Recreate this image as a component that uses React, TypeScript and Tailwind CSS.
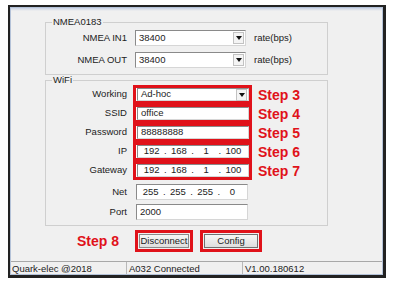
import React from "react";

const ui = { fontFamily: '"Liberation Sans", Arial, sans-serif' };

function Combo({ value }: { value: string }) {
  return (
    <div className="flex h-full w-full items-center border border-t-[#8a8a8a] border-l-[#8a8a8a] border-r-[#d6d6d6] border-b-[#d6d6d6] bg-white pl-[3px]">
      <span className="flex-1">{value}</span>
      <span className="mr-[1px] flex h-[12px] w-[11px] items-center justify-center border border-[#c2c2c2] bg-[#f4f4f4]">
        <svg width="6" height="4" viewBox="0 0 6 4">
          <path d="M0 0h6L3 4z" fill="#111" />
        </svg>
      </span>
    </div>
  );
}

function Field({ children }: { children: React.ReactNode }) {
  return (
    <div className="flex h-full w-full items-center border border-t-[#8a8a8a] border-l-[#8a8a8a] border-r-[#d6d6d6] border-b-[#d6d6d6] bg-white pl-[3px]">
      {children}
    </div>
  );
}

function Ip({ parts }: { parts: string[] }) {
  return (
    <Field>
      <div className="flex w-full items-center pr-[4px]">
        {parts.map((p, i) => (
          <React.Fragment key={i}>
            {i > 0 && <span className="w-[6px] text-center">.</span>}
            <span className="flex-1 text-center">{p}</span>
          </React.Fragment>
        ))}
      </div>
    </Field>
  );
}

function Step({ n }: { n: number }) {
  return (
    <span className="ml-[6px] text-[14px] font-bold leading-none text-[#e0121a]" style={ui}>
      Step {n}
    </span>
  );
}

function RedRow({ label, step, children }: { label: string; step: number; children: React.ReactNode }) {
  return (
    <div className="flex h-[19px] items-center">
      <span className="w-[82px] pr-[1px] text-right">{label}</span>
      <div className="ml-[5px] h-[19px] w-[119px] border-[3px] border-[#e0121a] bg-white pl-px">{children}</div>
      <Step n={step} />
    </div>
  );
}

function PlainRow({ label, children }: { label: string; children: React.ReactNode }) {
  return (
    <div className="flex h-[16px] items-center">
      <span className="w-[82px] pr-[1px] text-right">{label}</span>
      <div className="ml-[8px] h-[16px] w-[112px]">{children}</div>
    </div>
  );
}

export default function App() {
  return (
    <div className="h-[286px] w-[399px] bg-white pl-[8px] pt-[5px] text-[9.5px] text-[#222]" style={ui}>
      <div className="h-[273px] w-[378px] border-2 border-r-[3px] border-b-[3px] border-[#222]">
        <div className="flex h-full flex-col border border-[#b4c2d8] bg-[#f0f0f0]">
          <div className="h-[3px] bg-gradient-to-b from-[#c9d2e4] to-[#f0f0f0]" />
          {/* NMEA0183 */}
          <fieldset className="ml-[34px] mt-[6px] w-[283px] border border-[#cfcfcf] px-0 pb-[6px] pt-[3px]">
            <legend className="ml-[6px] px-[1px] leading-[10px]">NMEA0183</legend>
            <div className="flex flex-col gap-[6px]">
              {["NMEA IN1", "NMEA OUT"].map((l) => (
                <div key={l} className="flex h-[16px] items-center">
                  <span className="w-[82px] pr-[1px] text-right">{l}</span>
                  <div className="ml-[7px] h-[16px] w-[111px]">
                    <Combo value="38400" />
                  </div>
                  <span className="ml-[8px]">rate(bps)</span>
                </div>
              ))}
            </div>
          </fieldset>

          {/* WiFi */}
          <fieldset className="ml-[34px] w-[283px] border border-[#cfcfcf] px-0 pb-[5px] pt-0">
            <legend className="ml-[6px] px-[1px] leading-[10px]">WiFi</legend>
            <div className="flex flex-col">
              <RedRow label="Working" step={3}>
                <Combo value="Ad-hoc" />
              </RedRow>
              <RedRow label="SSID" step={4}>
                <Field>office</Field>
              </RedRow>
              <RedRow label="Password" step={5}>
                <Field>88888888</Field>
              </RedRow>
              <RedRow label="IP" step={6}>
                <Ip parts={["192", "168", "1", "100"]} />
              </RedRow>
              <RedRow label="Gateway" step={7}>
                <Ip parts={["192", "168", "1", "100"]} />
              </RedRow>
              <div className="mt-[4px] flex flex-col gap-[4px]">
                <PlainRow label="Net">
                  <Ip parts={["255", "255", "255", "0"]} />
                </PlainRow>
                <PlainRow label="Port">
                  <Field>2000</Field>
                </PlainRow>
              </div>
            </div>
          </fieldset>

          {/* Buttons */}
          <div className="mt-[4px] flex h-[22px] items-center">
            <span className="ml-[66px] w-[58px] text-[14px] font-bold leading-none text-[#e0121a]">Step 8</span>
            <div className="flex h-[22px] w-[58px] border-[3px] border-[#e0121a] p-[1px]">
              <button className="h-full w-full border border-[#8a8a8a] bg-gradient-to-b from-[#f6f6f6] to-[#dedede] text-[9.5px] leading-none">
                Disconnect
              </button>
            </div>
            <div className="ml-[7px] flex h-[22px] w-[62px] border-[3px] border-[#e0121a] p-[1px]">
              <button className="h-full w-full border border-[#707070] bg-gradient-to-b from-[#f6f6f6] to-[#dedede] text-[9.5px] leading-none">
                Config
              </button>
            </div>
          </div>

          {/* Status bar */}
          <div className="mt-auto flex h-[13px] items-center border-t border-[#a8a8a8] bg-[#f0f0f0] leading-none">
            <span className="h-full w-[116px] border-r border-[#b8b8b8] pl-[1px] pt-[2px]">Quark-elec @2018</span>
            <span className="h-full w-[116px] border-r border-[#b8b8b8] pl-[2px] pt-[2px]">A032 Connected</span>
            <span className="h-full flex-1 pl-[2px] pt-[2px]">V1.00.180612</span>
          </div>
        </div>
      </div>
    </div>
  );
}
